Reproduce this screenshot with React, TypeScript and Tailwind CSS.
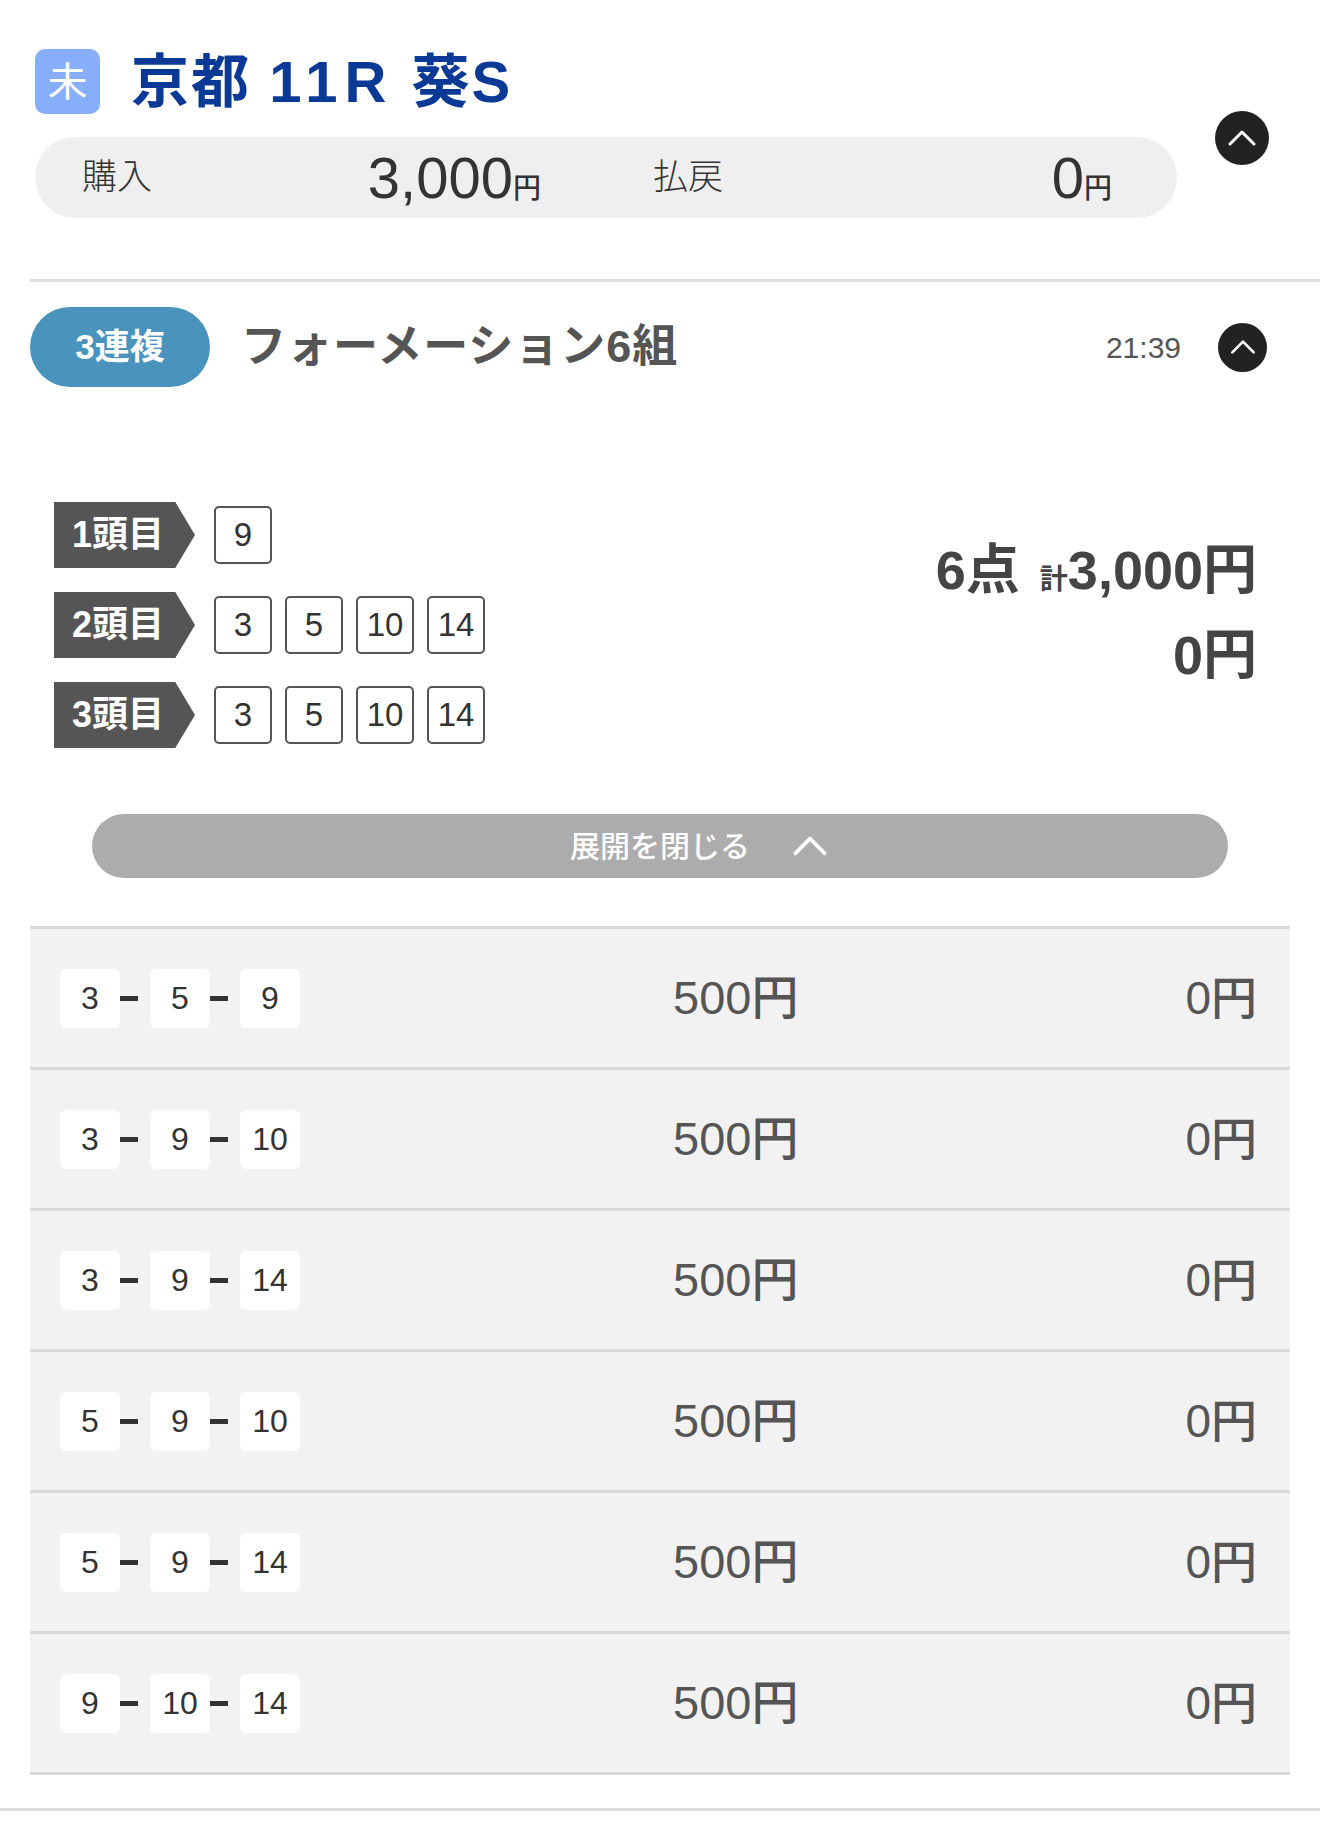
import React from "react";

const ChevronUp = ({ className }: { className?: string }) => (
  <svg viewBox="0 0 24 24" className={className} fill="none" stroke="currentColor" strokeWidth={2} strokeLinecap="round" strokeLinejoin="round" aria-hidden>
    <path d="M4 16l8-8 8 8" />
  </svg>
);

const formation = [
  { label: "1頭目", nums: ["9"] },
  { label: "2頭目", nums: ["3", "5", "10", "14"] },
  { label: "3頭目", nums: ["3", "5", "10", "14"] },
];

const combos = [
  ["3", "5", "9"],
  ["3", "9", "10"],
  ["3", "9", "14"],
  ["5", "9", "10"],
  ["5", "9", "14"],
  ["9", "10", "14"],
];

export default function App() {
  return (
    <div className="w-[1320px] bg-white pb-[24px] font-['Liberation_Sans','Noto_Sans_CJK_JP',sans-serif]">
      {/* race header */}
      <div className="flex items-center pl-[35px] pt-[49px]">
        <div className="w-[1142px]">
          <div className="flex h-[65px] items-center">
            <span className="flex h-[65px] w-[65px] items-center justify-center rounded-[10px] bg-[#86aefb] text-[40px] leading-none text-white">
              未
            </span>
            <h1 className="ml-[31px] text-[58px] font-bold leading-none tracking-[2px] text-[#0b3a96]">
              京都 <span className="tracking-[7px]">11R</span> 葵S
            </h1>
          </div>
          <div className="mt-[23px] flex h-[81px] rounded-full bg-[#efefef] text-[#333]">
            <div className="flex flex-1 items-center justify-between pl-[47px] pr-[65px]">
              <span className="text-[35px] font-light">購入</span>
              <span className="text-[58px] font-medium leading-none">
                3,000<span className="text-[28px]">円</span>
              </span>
            </div>
            <div className="flex flex-1 items-center justify-between pl-[47px] pr-[65px]">
              <span className="text-[35px] font-light">払戻</span>
              <span className="text-[58px] font-medium leading-none">
                0<span className="text-[28px]">円</span>
              </span>
            </div>
          </div>
        </div>
        <button className="ml-[38px] mt-[8px] flex h-[54px] w-[54px] items-center justify-center rounded-full bg-[#222] text-white">
          <ChevronUp className="h-[36px] w-[36px]" />
        </button>
      </div>

      <div className="ml-[30px] mt-[61px] h-[3px] bg-[#dcdcdc]" />

      {/* bet header */}
      <div className="mt-[25px] flex h-[80px] items-center pl-[30px] pr-[53px]">
        <span className="flex h-[80px] w-[180px] items-center justify-center rounded-full bg-[#4a93bd] text-[35px] font-bold text-white">
          3連複
        </span>
        <span className="ml-[31px] text-[45px] font-bold tracking-[1px] text-[#555]">フォーメーション6組</span>
        <span className="ml-auto text-[30px] text-[#555]">21:39</span>
        <button className="ml-[37px] flex h-[49px] w-[49px] items-center justify-center rounded-full bg-[#222] text-white">
          <ChevronUp className="h-[32px] w-[32px]" />
        </button>
      </div>

      {/* formation */}
      <div className="mt-[115px] flex pl-[54px] pr-[63px]">
        <div className="flex flex-col gap-[24px]">
          {formation.map((row) => (
            <div key={row.label} className="flex items-center">
              <span className="flex h-[66px] w-[141px] items-center bg-[#555] pl-[18px] text-[36px] font-bold text-white [clip-path:polygon(0_0,86%_0,100%_50%,86%_100%,0_100%)]">
                {row.label}
              </span>
              <div className="ml-[19px] flex gap-[13px]">
                {row.nums.map((n, i) => (
                  <span
                    key={i}
                    className="flex h-[58px] w-[58px] items-center justify-center rounded-[5px] border-2 border-[#555] text-[33px] text-[#333]"
                  >
                    {n}
                  </span>
                ))}
              </div>
            </div>
          ))}
        </div>
        <div className="ml-auto pt-[38px] text-right font-bold text-[#444]">
          <div className="text-[54px] leading-[60px]">
            6点<span className="ml-[20px] text-[28px]">計</span>3,000円
          </div>
          <div className="mt-[15px] text-[54px] leading-[60px]">0円</div>
        </div>
      </div>

      {/* collapse */}
      <button className="mx-[92px] mt-[66px] flex h-[64px] w-[1136px] items-center justify-center rounded-full bg-[#acacac] text-white">
        <span className="relative text-[30px] font-medium">
          展開を閉じる
          <ChevronUp className="absolute left-[calc(100%+38px)] top-1/2 h-[44px] w-[44px] -translate-y-1/2" />
        </span>
      </button>

      {/* combinations */}
      <div className="mx-[30px] mt-[48px] border-b-[3px] border-[#d9d9d9]">
        {combos.map((c, ri) => (
          <div key={ri} className="flex h-[141px] items-center border-t-[3px] border-[#d9d9d9] bg-[#f2f2f2] pl-[30px] pr-[33px]">
            <div className="flex w-[613px] items-center">
              {c.map((n, i) => (
                <React.Fragment key={i}>
                  <span className="flex h-[59px] w-[60px] items-center justify-center rounded-[6px] bg-white text-[32px] font-medium text-[#333]">
                    {n}
                  </span>
                  {i < c.length - 1 && <span className="mr-[12px] h-[5px] w-[18px] bg-[#333]" />}
                </React.Fragment>
              ))}
            </div>
            <span className="text-[47px] font-medium text-[#555]">500円</span>
            <span className="ml-auto text-[46px] font-medium text-[#555]">0円</span>
          </div>
        ))}
      </div>

      <div className="mt-[33px] h-[3px] bg-[#dcdcdc]" />
    </div>
  );
}
